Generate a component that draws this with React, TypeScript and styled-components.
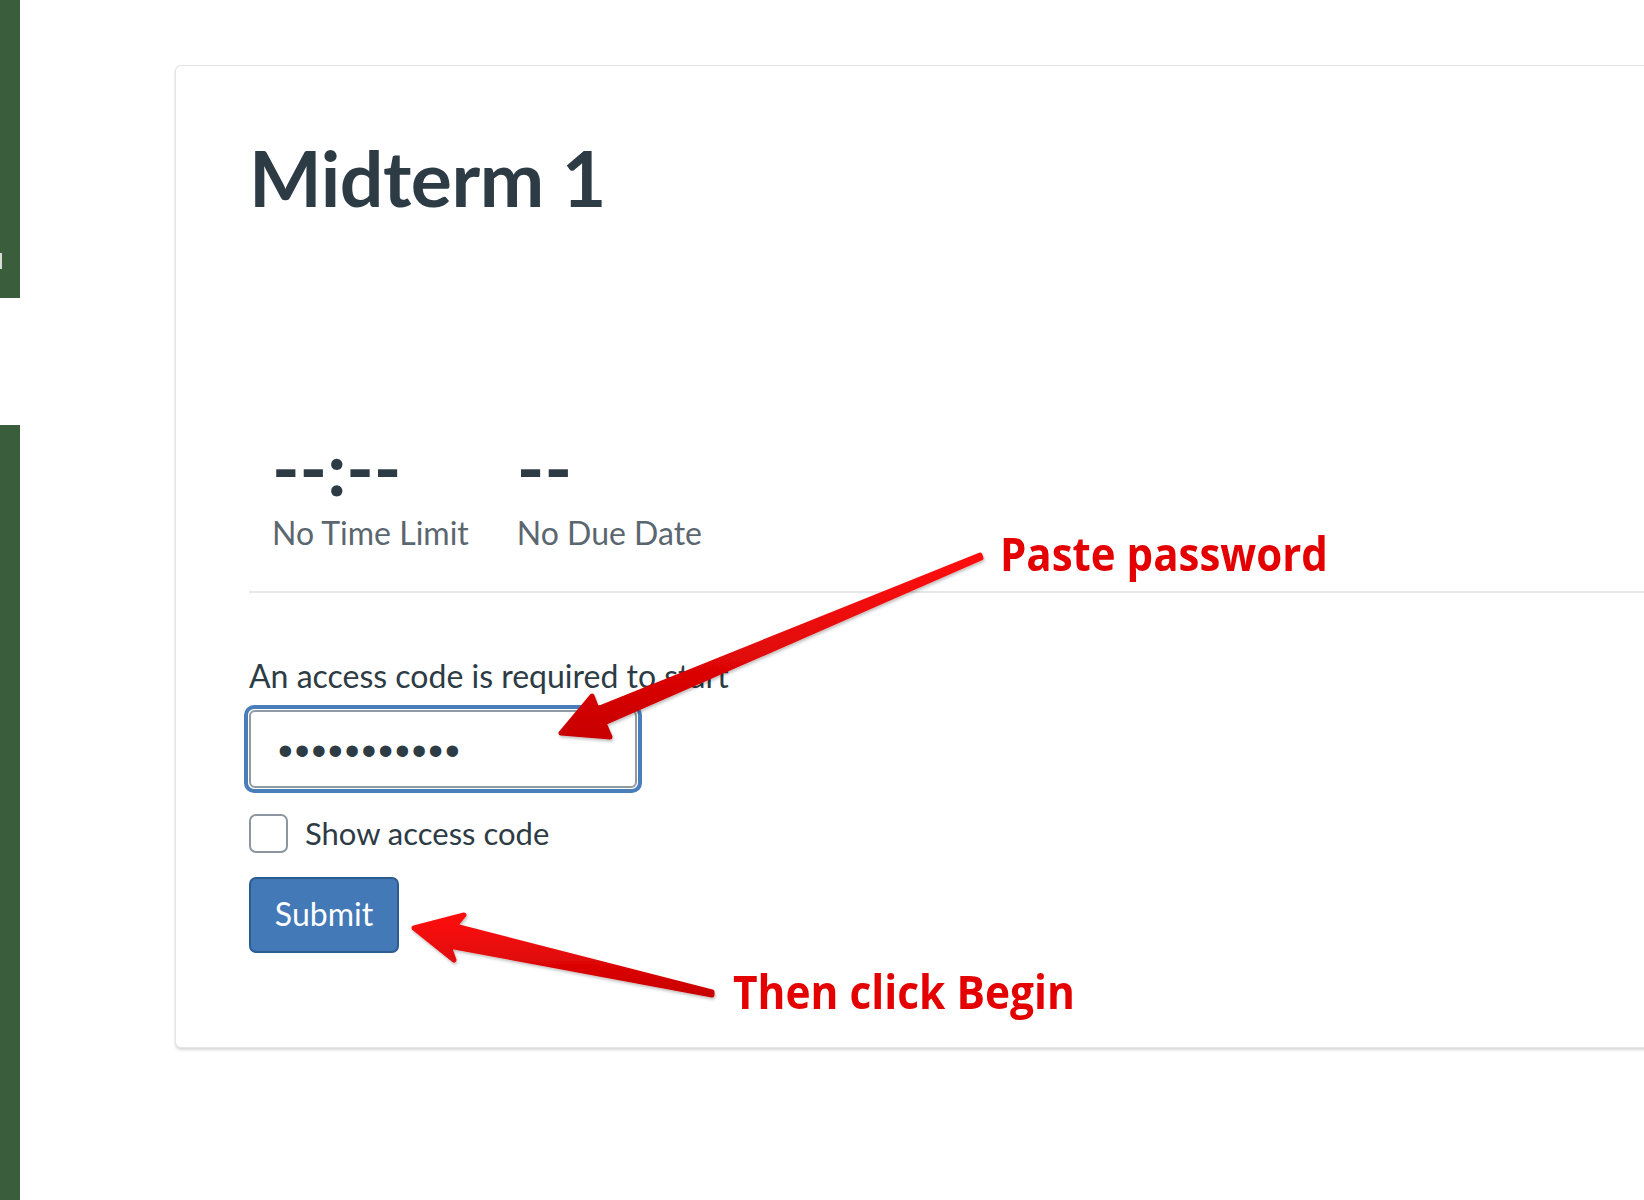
import React from "react";
import styled, { createGlobalStyle } from "styled-components";

const GlobalStyle = createGlobalStyle`
  html, body {
    margin: 0;
    padding: 0;
    background: #ffffff;
    overflow: hidden;
  }
  * { box-sizing: border-box; }
`;

const Page = styled.div`
  position: relative;
  display: flex;
  width: 1644px;
  height: 1200px;
  overflow: hidden;
  background: #ffffff;
  font-family: Lato, "Open Sans", sans-serif;
`;

const Sidebar = styled.aside`
  flex: 0 0 20px;
  display: flex;
  flex-direction: column;
  gap: 127px;
`;

const GreenBlock = styled.div<{ $height?: number }>`
  background: #3a5e3c;
  ${(p) => (p.$height ? `height: ${p.$height}px;` : "flex: 1;")}
  position: relative;
`;

const Notch = styled.span`
  position: absolute;
  left: 0;
  top: 253px;
  width: 2px;
  height: 16px;
  background: #d8ddd8;
`;

const Main = styled.main`
  flex: 1;
  min-width: 0;
  padding: 65px 0 0 155px;
`;

const Card = styled.section`
  width: 1600px;
  height: 983px;
  background: #ffffff;
  border: 1px solid #e2e4e6;
  border-right: none;
  border-radius: 6px 0 0 6px;
  box-shadow: 0 2px 3px rgba(0, 0, 0, 0.16);
  padding: 63px 0 0 73px;
`;

const Title = styled.h1`
  margin: 0;
  font-family: Lato, sans-serif;
  font-weight: 700;
  font-size: 77px;
  line-height: 96px;
  color: #2d3b45;
  letter-spacing: -0.5px;
`;

const Stats = styled.div`
  display: flex;
  gap: 48px;
  margin-top: 213px;
  padding-left: 23px;
  padding-bottom: 38px;
  border-bottom: 2px solid #e6e7e8;
`;

const Stat = styled.div`
  display: flex;
  flex-direction: column;
`;

const StatValue = styled.div`
  font-family: Lato, sans-serif;
  font-weight: 700;
  font-size: 74px;
  line-height: 60px;
  color: #2d3b45;
  height: 75px;
`;

const StatLabel = styled.div`
  font-family: Lato, sans-serif;
  font-weight: 400;
  font-size: 32px;
  line-height: 40px;
  color: #5b6770;
`;

const Form = styled.form`
  display: flex;
  flex-direction: column;
  align-items: flex-start;
  padding-top: 64px;
`;

const Label = styled.label`
  font-family: Lato, sans-serif;
  font-size: 32px;
  line-height: 38px;
  color: #2d3b45;
`;

const InputRing = styled.div`
  margin-top: 10px;
  margin-left: -5px;
  width: 398px;
  height: 88px;
  border: 4px solid #4a7ebb;
  border-radius: 10px;
  padding: 1px;
`;

const Input = styled.input`
  width: 100%;
  height: 100%;
  border: 2px solid #8f9aa3;
  border-radius: 6px;
  padding: 4px 0 0 27px;
  font-family: "Liberation Sans", sans-serif;
  font-size: 42px;
  letter-spacing: 2px;
  color: #2d3b45;
  outline: none;
  background: #fff;
`;

const CheckRow = styled.div`
  display: flex;
  align-items: center;
  gap: 17px;
  margin-top: 20px;
`;

const CheckBox = styled.span`
  width: 39px;
  height: 39px;
  border: 2px solid #8b96a0;
  border-radius: 7px;
  background: #fff;
`;

const CheckText = styled.span`
  font-family: Lato, sans-serif;
  font-size: 31px;
  line-height: 40px;
  color: #2d3b45;
`;

const SubmitButton = styled.button`
  margin-top: 24px;
  width: 150px;
  height: 76px;
  background: #4279b6;
  border: 2px solid #2d5c91;
  border-radius: 7px;
  color: #ffffff;
  font-family: Lato, sans-serif;
  font-size: 32px;
  padding: 0 0 4px;
  cursor: pointer;
`;

const Overlay = styled.svg`
  position: absolute;
  left: 0;
  top: 0;
  width: 1644px;
  height: 1200px;
  pointer-events: none;
`;

const Note = styled.div<{ $left: number; $top: number; $scale: number }>`
  position: absolute;
  left: ${(p) => p.$left}px;
  top: ${(p) => p.$top}px;
  font-family: "Open Sans", sans-serif;
  font-weight: 700;
  font-size: 46px;
  line-height: 1;
  color: #e40000;
  white-space: nowrap;
  transform: scaleX(${(p) => p.$scale});
  transform-origin: left top;
`;

export default function App() {
  return (
    <>
      <GlobalStyle />
      <Page>
        <Sidebar>
          <GreenBlock $height={298}>
            <Notch />
          </GreenBlock>
          <GreenBlock />
        </Sidebar>
        <Main>
          <Card>
            <Title>Midterm 1</Title>
            <Stats>
              <Stat>
                <StatValue>--:--</StatValue>
                <StatLabel>No Time Limit</StatLabel>
              </Stat>
              <Stat>
                <StatValue>--</StatValue>
                <StatLabel>No Due Date</StatLabel>
              </Stat>
            </Stats>
            <Form onSubmit={(e) => e.preventDefault()}>
              <Label htmlFor="code">An access code is required to start</Label>
              <InputRing>
                <Input id="code" type="password" defaultValue="abcdefghijk" readOnly />
              </InputRing>
              <CheckRow>
                <CheckBox />
                <CheckText>Show access code</CheckText>
              </CheckRow>
              <SubmitButton type="submit">Submit</SubmitButton>
            </Form>
          </Card>
        </Main>

        <Overlay viewBox="0 0 1644 1200">
          <defs>
            <linearGradient id="red" x1="0" y1="0" x2="0" y2="1">
              <stop offset="0" stopColor="#ff1010" />
              <stop offset="1" stopColor="#c80000" />
            </linearGradient>
            <filter id="shade" x="-10%" y="-10%" width="120%" height="130%">
              <feDropShadow dx="1" dy="2" stdDeviation="1.5" floodColor="#000" floodOpacity="0.25" />
            </filter>
          </defs>
          <g filter="url(#shade)" fill="url(#red)" stroke="url(#red)" strokeLinejoin="round" strokeWidth="5">
            <polygon points="980,555 597,709 592,696 561,733 610,737 604,723 981,558" />
            <polygon points="712,992 455,926 464,915 414,928 454,960 449,946 712,995" />
          </g>
        </Overlay>
        <Note $left={1000} $top={530} $scale={0.913}>Paste password</Note>
        <Note $left={733} $top={968} $scale={0.923}>Then click Begin</Note>
      </Page>
    </>
  );
}
